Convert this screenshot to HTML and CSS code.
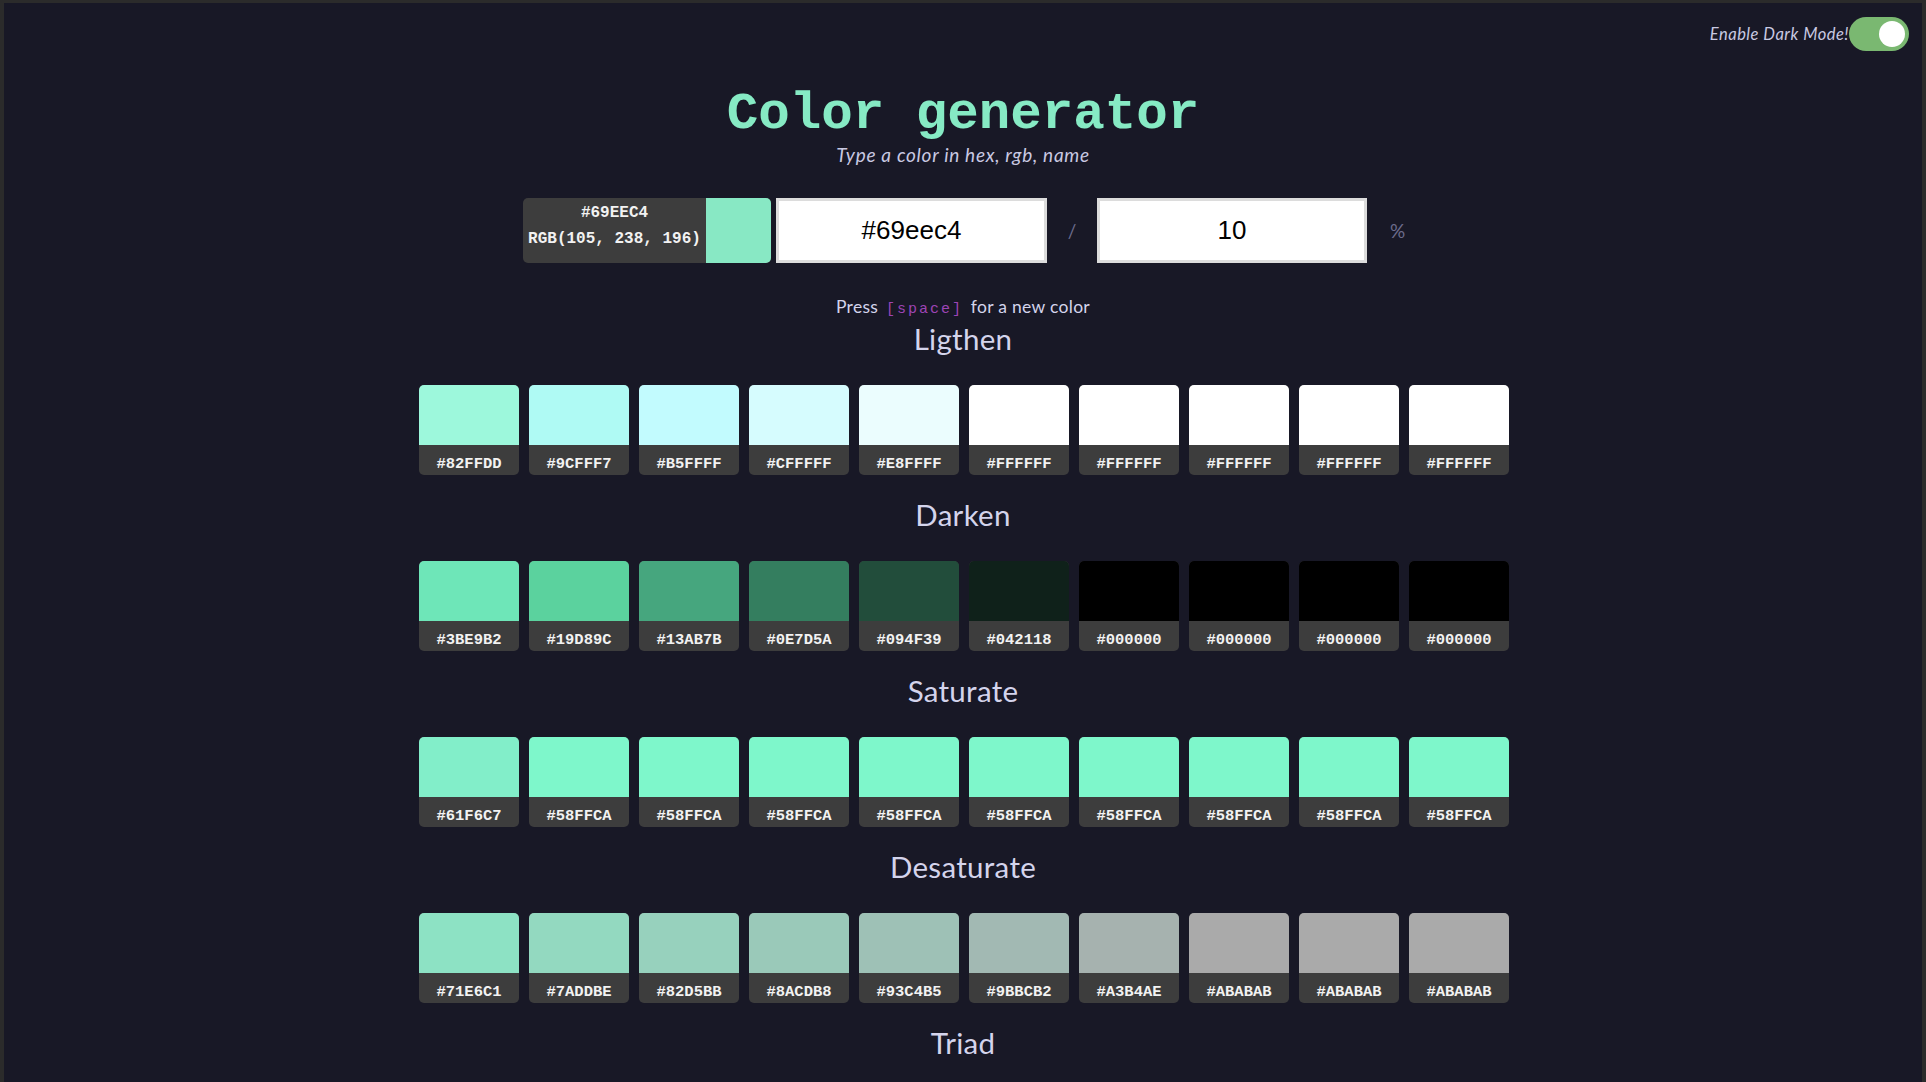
FILE: index.html
```html
<!DOCTYPE html>
<html lang="en">
<head>
<meta charset="utf-8">
<title>Color generator</title>
<link rel="stylesheet" href="styles.css">
</head>
<body>
<div class="page">
  <div class="topbar">
    <span class="mode-label">Enable Dark Mode!</span>
    <span class="toggle"><span class="knob"></span></span>
  </div>

  <h1 class="title">Color generator</h1>
  <p class="subtitle">Type a color in hex, rgb, name</p>

  <div class="controls">
    <div class="current">
      <div class="current-info">
        <div>#69EEC4</div>
        <div>RGB(105, 238, 196)</div>
      </div>
      <div class="current-swatch"></div>
    </div>
    <div class="field field-color">#69eec4</div>
    <span class="sep">/</span>
    <div class="field field-amount">10</div>
    <span class="unit">%</span>
  </div>

  <p class="hint">Press <kbd class="key">[space]</kbd> for a new color</p>

  <section class="group">
    <h2 class="group-title">Ligthen</h2>
    <div class="swatches">
      <div class="swatch"><div class="chip" style="background:#9df8dc"></div><div class="code">#82FFDD</div></div>
      <div class="swatch"><div class="chip" style="background:#affaf4"></div><div class="code">#9CFFF7</div></div>
      <div class="swatch"><div class="chip" style="background:#c2fbfe"></div><div class="code">#B5FFFF</div></div>
      <div class="swatch"><div class="chip" style="background:#d6fcfe"></div><div class="code">#CFFFFF</div></div>
      <div class="swatch"><div class="chip" style="background:#ebfdfe"></div><div class="code">#E8FFFF</div></div>
      <div class="swatch"><div class="chip" style="background:#ffffff"></div><div class="code">#FFFFFF</div></div>
      <div class="swatch"><div class="chip" style="background:#ffffff"></div><div class="code">#FFFFFF</div></div>
      <div class="swatch"><div class="chip" style="background:#ffffff"></div><div class="code">#FFFFFF</div></div>
      <div class="swatch"><div class="chip" style="background:#ffffff"></div><div class="code">#FFFFFF</div></div>
      <div class="swatch"><div class="chip" style="background:#ffffff"></div><div class="code">#FFFFFF</div></div>
    </div>
  </section>

  <section class="group">
    <h2 class="group-title">Darken</h2>
    <div class="swatches">
      <div class="swatch"><div class="chip" style="background:#6ee6b8"></div><div class="code">#3BE9B2</div></div>
      <div class="swatch"><div class="chip" style="background:#5bd29e"></div><div class="code">#19D89C</div></div>
      <div class="swatch"><div class="chip" style="background:#46a67e"></div><div class="code">#13AB7B</div></div>
      <div class="swatch"><div class="chip" style="background:#347e5f"></div><div class="code">#0E7D5A</div></div>
      <div class="swatch"><div class="chip" style="background:#224d3b"></div><div class="code">#094F39</div></div>
      <div class="swatch"><div class="chip" style="background:#0f211a"></div><div class="code">#042118</div></div>
      <div class="swatch"><div class="chip" style="background:#000000"></div><div class="code">#000000</div></div>
      <div class="swatch"><div class="chip" style="background:#000000"></div><div class="code">#000000</div></div>
      <div class="swatch"><div class="chip" style="background:#000000"></div><div class="code">#000000</div></div>
      <div class="swatch"><div class="chip" style="background:#000000"></div><div class="code">#000000</div></div>
    </div>
  </section>

  <section class="group">
    <h2 class="group-title">Saturate</h2>
    <div class="swatches">
      <div class="swatch"><div class="chip" style="background:#82eec9"></div><div class="code">#61F6C7</div></div>
      <div class="swatch"><div class="chip" style="background:#7ef7cb"></div><div class="code">#58FFCA</div></div>
      <div class="swatch"><div class="chip" style="background:#7ef7cb"></div><div class="code">#58FFCA</div></div>
      <div class="swatch"><div class="chip" style="background:#7ef7cb"></div><div class="code">#58FFCA</div></div>
      <div class="swatch"><div class="chip" style="background:#7ef7cb"></div><div class="code">#58FFCA</div></div>
      <div class="swatch"><div class="chip" style="background:#7ef7cb"></div><div class="code">#58FFCA</div></div>
      <div class="swatch"><div class="chip" style="background:#7ef7cb"></div><div class="code">#58FFCA</div></div>
      <div class="swatch"><div class="chip" style="background:#7ef7cb"></div><div class="code">#58FFCA</div></div>
      <div class="swatch"><div class="chip" style="background:#7ef7cb"></div><div class="code">#58FFCA</div></div>
      <div class="swatch"><div class="chip" style="background:#7ef7cb"></div><div class="code">#58FFCA</div></div>
    </div>
  </section>

  <section class="group">
    <h2 class="group-title">Desaturate</h2>
    <div class="swatches">
      <div class="swatch"><div class="chip" style="background:#8de2c4"></div><div class="code">#71E6C1</div></div>
      <div class="swatch"><div class="chip" style="background:#93d9c0"></div><div class="code">#7ADDBE</div></div>
      <div class="swatch"><div class="chip" style="background:#97d1bd"></div><div class="code">#82D5BB</div></div>
      <div class="swatch"><div class="chip" style="background:#9ac9b9"></div><div class="code">#8ACDB8</div></div>
      <div class="swatch"><div class="chip" style="background:#9ec1b6"></div><div class="code">#93C4B5</div></div>
      <div class="swatch"><div class="chip" style="background:#a2b9b3"></div><div class="code">#9BBCB2</div></div>
      <div class="swatch"><div class="chip" style="background:#a6b2af"></div><div class="code">#A3B4AE</div></div>
      <div class="swatch"><div class="chip" style="background:#aaaaaa"></div><div class="code">#ABABAB</div></div>
      <div class="swatch"><div class="chip" style="background:#aaaaaa"></div><div class="code">#ABABAB</div></div>
      <div class="swatch"><div class="chip" style="background:#aaaaaa"></div><div class="code">#ABABAB</div></div>
    </div>
  </section>

  <section class="group">
    <h2 class="group-title">Triad</h2>
  </section>
</div>
</body>
</html>
```

FILE: styles.css
```css
html {
  background: #2b2b2b;
}

body {
  margin: 3px 4px 0 4px;
  background: #181826;
  font-family: Lato, "Noto Sans", sans-serif;
  color: #d4d4ec;
}

.page {
  display: flex;
  flex-direction: column;
  min-height: 1200px;
}

.topbar {
  display: flex;
  justify-content: flex-end;
  align-items: center;
  padding: 14px 13px 0 0;
  height: 34px;
}

.mode-label {
  font-style: italic;
  font-size: 16.5px;
  letter-spacing: 0.5px;
  color: #c9c9e2;
}

.toggle {
  display: flex;
  align-items: center;
  justify-content: flex-end;
  width: 60px;
  height: 34px;
  border-radius: 17px;
  background: #7ab871;
  padding: 0 4px;
  box-sizing: border-box;
}

.knob {
  width: 26px;
  height: 26px;
  border-radius: 50%;
  background: #ffffff;
}

.title {
  margin: 33px 0 0;
  text-align: center;
  font-family: "Liberation Mono", "Courier New", monospace;
  font-weight: 700;
  font-size: 52.5px;
  line-height: 60px;
  color: #86eac4;
}

.subtitle {
  margin: 0;
  text-align: center;
  font-style: italic;
  font-size: 19px;
  letter-spacing: 0.7px;
  line-height: 22px;
  color: #c9c9e2;
}

.controls {
  display: flex;
  align-items: center;
  margin-top: 32px;
  padding-left: 519px;
  height: 65px;
}

.current {
  display: flex;
  width: 248px;
  height: 65px;
  border-radius: 5px;
  overflow: hidden;
  background: #3d3d3d;
}

.current-info {
  flex: 1;
  padding-top: 2px;
  text-align: center;
  font-family: "Liberation Mono", "Courier New", monospace;
  font-weight: 700;
  font-size: 16px;
  line-height: 26px;
  color: #f2f2f2;
}

.current-swatch {
  width: 65px;
  background: #88e8c4;
}

.field {
  box-sizing: border-box;
  height: 65px;
  border: 3px solid #dcdcdc;
  background: #ffffff;
  display: flex;
  align-items: center;
  justify-content: center;
  font-family: "Liberation Sans", Arial, sans-serif;
  font-size: 26px;
  color: #000000;
}

.field-color {
  width: 271px;
  margin-left: 5px;
}

.field-amount {
  width: 270px;
}

.sep {
  width: 50px;
  text-align: center;
  font-size: 19px;
  color: #6c6c8c;
}

.unit {
  margin-left: 23px;
  font-size: 19px;
  color: #6c6c8c;
}

.hint {
  margin: 32px 0 0;
  height: 24px;
  text-align: center;
  font-size: 17.5px;
  letter-spacing: 0.3px;
  line-height: 24px;
  color: #d4d4ec;
}

.key {
  font-family: "Liberation Mono", "Courier New", monospace;
  font-size: 15px;
  line-height: 1;
  letter-spacing: 2px;
  color: #9d44b5;
  margin: 0 3px;
}

.group {
  display: flex;
  flex-direction: column;
  align-items: center;
  margin-bottom: 23px;
}

.hint + .group {
  margin-top: 3px;
}

.group-title {
  margin: 0 0 29px;
  font-weight: 400;
  font-size: 29.5px;
  letter-spacing: 0.3px;
  line-height: 34px;
  color: #d4d4ec;
}

.swatches {
  display: grid;
  grid-template-columns: repeat(10, 100px);
  gap: 10px;
  margin-left: 2px;
}

.swatch {
  display: flex;
  flex-direction: column;
  height: 90px;
  border-radius: 5px;
  overflow: hidden;
  background: #3d3d3d;
}

.chip {
  height: 60px;
}

.code {
  flex: 1;
  display: flex;
  align-items: center;
  justify-content: center;
  padding-top: 7px;
  font-family: "Liberation Mono", "Courier New", monospace;
  font-weight: 700;
  font-size: 15.5px;
  color: #f2f2f2;
}
```
